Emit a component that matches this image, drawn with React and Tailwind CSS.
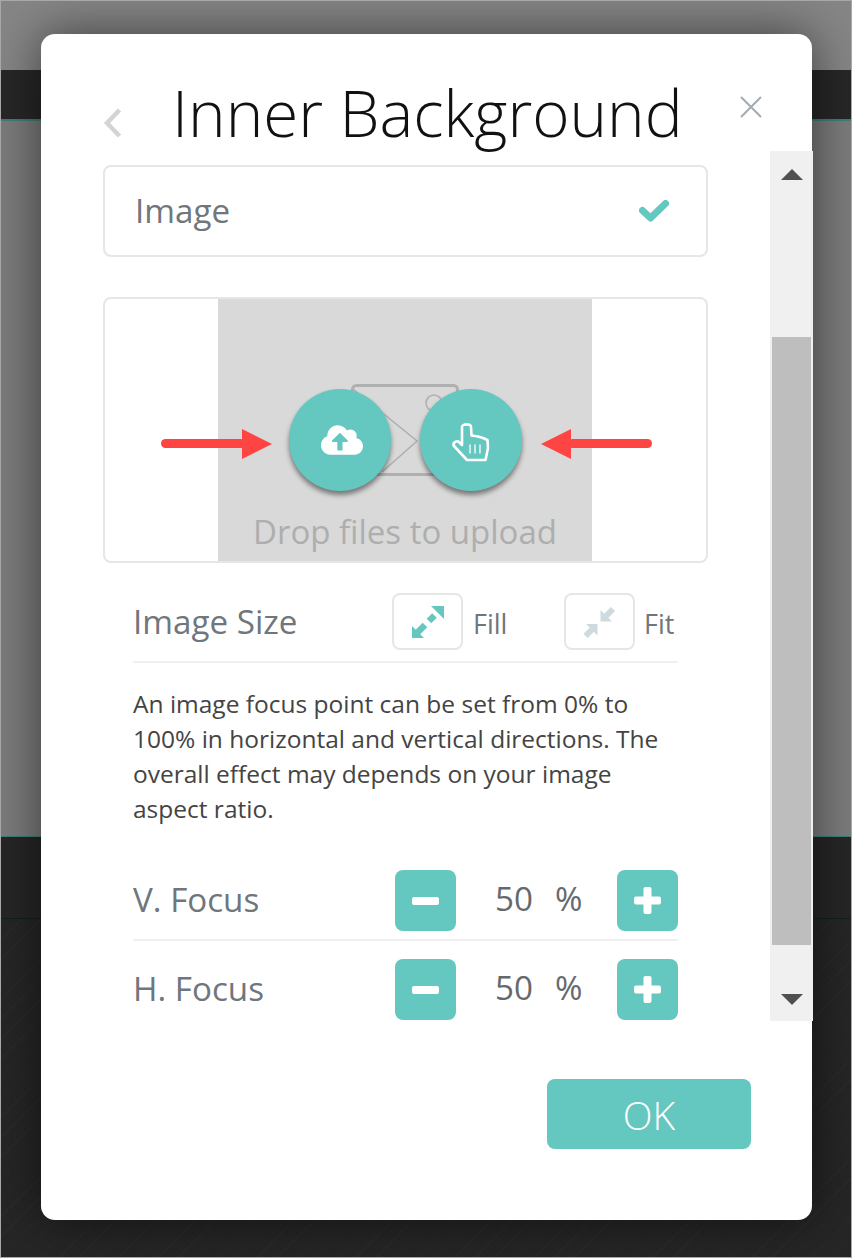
import React from "react";
import { FaCloudUploadAlt } from "react-icons/fa";

const FocusRow = ({ label, border }) => (
  <div className={`flex h-[89px] items-start pt-[10px] ${border ? "border-b-2 border-[#f0f0f0] h-[81px]! pt-0" : ""}`}>
    <span className="w-[262px] pt-[8px] text-[33.2px] leading-[44px] text-[#6f767c]">{label}</span>
    <button className="flex h-[61px] w-[61px] items-center justify-center rounded-lg bg-[#64c7c0]">
      <span className="h-[8px] w-[27px] rounded-[2px] bg-white" />
    </button>
    <span className="ml-[39px] w-[60px] text-[33.2px] leading-[58px] text-[#66696c]">50</span>
    <span className="w-[62px] text-[33.2px] leading-[58px] text-[#66696c]">%</span>
    <button className="flex h-[61px] w-[61px] items-center justify-center rounded-lg bg-[#64c7c0]">
      <svg width="27" height="27" viewBox="0 0 27 27" fill="#fff">
        <rect x="9.5" y="0" width="8" height="27" rx="2" />
        <rect x="0" y="9.5" width="27" height="8" rx="2" />
      </svg>
    </button>
  </div>
);

const RedArrow = ({ flip, className }) => (
  <svg width="112" height="30" viewBox="0 0 112 30" className={className}>
    <g transform={flip ? "matrix(-1 0 0 1 112 0)" : undefined}>
      <rect x="0" y="10" width="84" height="9" rx="4.5" fill="#ff4444" />
      <path d="M81 0 L111 15 L81 30 Z" fill="#ff4444" />
    </g>
  </svg>
);

const App = () => {
  return (
    <div className="relative h-[1258px] w-[852px] overflow-hidden border border-[#a8a8a8] bg-[#7c7c7c] font-['Open_Sans',sans-serif]">
      {/* page behind the overlay */}
      <div className="h-[69px] bg-[#868686]" />
      <div className="h-[51px] border-b-2 border-[#3f7f7a] bg-[#272727]" />
      <div className="h-[715px] bg-[#7c7c7c]" />
      <div className="h-[83px] border-y border-t-[#3f7f7a] border-b-[#122020] bg-[#262626]" />
      <div className="h-[340px] bg-[#262626] bg-[repeating-linear-gradient(135deg,#2a2a2a_0px,#2a2a2a_1px,#262626_1px,#262626_14px)]" />

      {/* modal */}
      <div className="absolute left-[40px] top-[33px] flex h-[1186px] w-[771px] flex-col rounded-[14px] bg-white shadow-[0_0_50px_rgba(0,0,0,0.55)]">
        {/* header */}
        <div className="flex h-[117px] shrink-0 pl-[62px]">
          <svg width="20" height="30" viewBox="0 0 20 30" className="mt-[74px]" fill="none">
            <path d="M16.5 2 L4 15 L16.5 28" stroke="#d4d4d4" strokeWidth="4.5" />
          </svg>
          <h1 className="ml-[49px] mt-[36px] h-[86px] text-[63.7px] font-light leading-[86px] text-[#111] whitespace-nowrap">
            Inner Background
          </h1>
          <svg width="22" height="22" viewBox="0 0 22 22" className="ml-[57px] mt-[62px]" fill="none">
            <path d="M1 1 L21 21 M21 1 L1 21" stroke="#a3aab0" strokeWidth="2" />
          </svg>
        </div>

        {/* body + scrollbar */}
        <div className="flex h-[870px] shrink-0">
          <div className="w-[729px] shrink-0 pl-[62px] pt-[14px]">
            <div className="flex h-[92px] w-[605px] items-center justify-between rounded-lg border-2 border-[#e6e6e6] pl-[30px] pr-[37px]">
              <span className="text-[33.2px] text-[#6f767c]">Image</span>
              <svg width="30" height="23" viewBox="0 0 30 23" fill="none" stroke="#64c7c0" strokeWidth="7" strokeLinejoin="round">
                <path d="M3.5 10.5 L11.5 18 L26.5 3.5" strokeLinecap="round" />
              </svg>
            </div>

            {/* upload box */}
            <div className="relative mt-[40px] flex h-[266px] w-[605px] rounded-lg border-2 border-[#e6e6e6] pl-[113px]">
              <div className="relative flex w-[374px] flex-col items-center justify-end bg-[#d9d9d9]">
                <svg width="108" height="92" viewBox="0 0 108 92" className="absolute left-[133px] top-[85px]" fill="none" stroke="#b0b0b0">
                  <rect x="1.5" y="1.5" width="105" height="89" rx="4" strokeWidth="3" />
                  <path d="M2 5 L66 57 L31 88" strokeWidth="1.6" />
                  <circle cx="83" cy="19" r="8" strokeWidth="1.6" />
                </svg>
                <span className="pb-[4px] text-[33px] leading-[50px] text-[#aeaeae]">Drop files to upload</span>
              </div>
              <RedArrow className="absolute left-[56px] top-[130px]" />
              <div className="absolute left-[184px] top-[90px] flex h-[102px] w-[102px] items-center justify-center rounded-full bg-[#64c7c0] pl-[3px] shadow-[0_4px_5px_rgba(0,0,0,0.45)]">
                <FaCloudUploadAlt className="text-[42px] text-white" />
              </div>
              <div className="absolute left-[315px] top-[90px] flex h-[102px] w-[102px] items-center justify-center rounded-full bg-[#64c7c0] pt-[6px] pl-[2px] shadow-[0_4px_5px_rgba(0,0,0,0.45)]">
                <svg width="40" height="40" viewBox="0 0 40 40" fill="none" stroke="#fff" strokeLinejoin="round" strokeLinecap="round">
                  <path d="M10 22 L10 4 C10 0.5 19 0.5 19 4 L19.5 12.5 L26 13.5 L31 15 L35.5 17 L36 25 L33.5 37 L15 37 L2 23 C0 20 5 17 7 19 L10 22" strokeWidth="2.6" />
                  <path d="M18 22 V30 M23 22 V30 M28 22 V30" strokeWidth="1.3" />
                </svg>
              </div>
              <RedArrow flip className="absolute left-[435px] top-[130px]" />
            </div>

            <div className="w-[575px] pl-[30px]">
              {/* image size */}
              <div className="mt-[30px] flex h-[70px] w-[545px] items-start border-b-2 border-[#f0f0f0]">
                <span className="w-[259px] pt-[7px] text-[33.2px] leading-[44px] text-[#6f767c]">Image Size</span>
                <div className="flex h-[57px] w-[71px] items-center justify-center rounded-lg border-2 border-[#e6e6e6]">
                  <svg width="32" height="32" viewBox="0 0 32 32" fill="#64c7c0" stroke="none">
                    <path d="M32 0 V13 L19 0 Z" />
                    <path d="M0 32 V20 L12 32 Z" />
                    <path d="M22.5 9.5 L17 15 M5 27 L13 19" stroke="#64c7c0" strokeWidth="6.5" />
                  </svg>
                </div>
                <span className="ml-[10px] w-[91px] pt-[13px] text-[27px] leading-[36px] text-[#6f767c]">Fill</span>
                <div className="flex h-[57px] w-[71px] items-center justify-center rounded-lg border-2 border-[#e6e6e6]">
                  <svg width="32" height="32" viewBox="0 0 32 32" fill="#cfdae0" stroke="none">
                    <path d="M16.5 15.5 V4 L28 15.5 Z" />
                    <path d="M13.5 18 V29.5 L2 18 Z" />
                    <path d="M22 10 L29 3 M8 23.5 L1.5 30" stroke="#cfdae0" strokeWidth="6" />
                  </svg>
                </div>
                <span className="ml-[9px] pt-[13px] text-[27px] leading-[36px] text-[#6f767c]">Fit</span>
              </div>

              <p className="mt-[23px] w-[545px] text-[24.5px] leading-[35px] text-[#444]">
                An image focus point can be set from 0% to 100% in horizontal and vertical directions. The overall effect may depends on your image aspect ratio.
              </p>

              <div className="mt-[34px] w-[545px]">
                <FocusRow label="V. Focus" border />
                <div className="h-[8px]" />
                <FocusRow label="H. Focus" />
              </div>
            </div>
          </div>

          {/* scrollbar */}
          <div className="flex w-[43px] shrink-0 flex-col items-center bg-[#f0f0f0]">
            <svg width="22" height="11" viewBox="0 0 22 11" className="mt-[18px] mb-[157px]" fill="#505050">
              <path d="M11 0 L22 11 H0 Z" />
            </svg>
            <div className="h-[608px] w-[39px] bg-[#bebebe]" />
            <svg width="22" height="11" viewBox="0 0 22 11" className="mt-[49px]" fill="#505050">
              <path d="M0 0 H22 L11 11 Z" />
            </svg>
          </div>
        </div>

        {/* footer */}
        <div className="flex justify-end pr-[61px] pt-[58px]">
          <button className="h-[70px] w-[204px] rounded-lg bg-[#64c7c0] pt-[3px] text-[39px] font-light text-white">OK</button>
        </div>
      </div>
    </div>
  );
};

export default App;
